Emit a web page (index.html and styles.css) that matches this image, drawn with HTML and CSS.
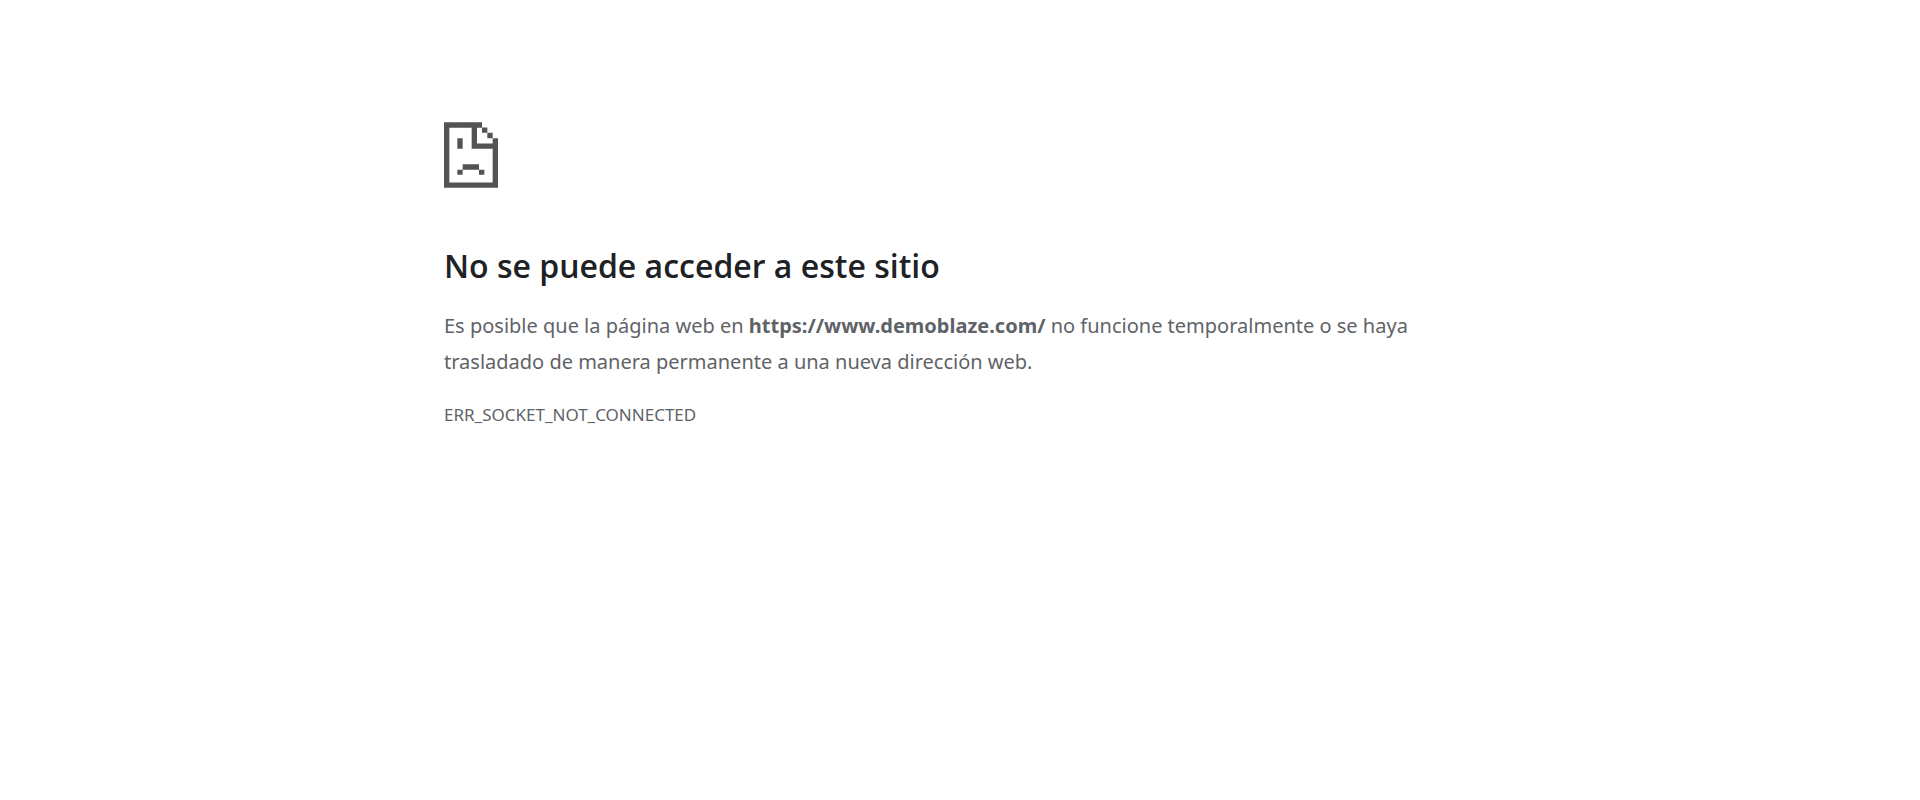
FILE: index.html
```html
<!DOCTYPE html>
<html lang="es">
<head>
<meta charset="utf-8">
<meta name="viewport" content="width=device-width, initial-scale=1">
<title>www.demoblaze.com</title>
<link rel="stylesheet" href="styles.css">
</head>
<body>
<main class="error-page">
  <svg class="error-icon" viewBox="0 0 162 197" aria-hidden="true">
    <path fill-rule="evenodd" d="M0 0H114V16H130V32H146V48H162V197H0ZM16 17V181H146V80H83V17ZM99 17V64H146V48H130V32H114V17Z"/>
    <path d="M40 48h16v32H40ZM56 126h49v17H56ZM40 143h16v15H40ZM105 143h16v15h-16Z"/>
  </svg>
  <h1 class="error-title">No se puede acceder a este sitio</h1>
  <p class="error-text">Es posible que la página web en <strong>https://www.demoblaze.com/</strong> no funcione temporalmente o se haya trasladado de manera permanente a una nueva dirección web.</p>
  <p class="error-code">ERR_SOCKET_NOT_CONNECTED</p>
</main>
</body>
</html>
```
FILE: styles.css
```css
body {
  margin: 0;
  background: #fff;
  color: #5f6368;
  font-family: "Segoe UI", "Noto Sans", "Open Sans", sans-serif;
}

.error-page {
  box-sizing: border-box;
  max-width: 1080px;
  margin: 0 auto;
  padding: 122px 24px 24px;
}

.error-icon {
  display: block;
  width: 54px;
  height: 66px;
  fill: #535353;
}

.error-title {
  margin: 56px 0 20px;
  color: #202124;
  font-family: "Segoe UI", "Open Sans", "Noto Sans", sans-serif;
  font-size: 32px;
  font-weight: 600;
  line-height: 44px;
}

.error-text {
  margin: 0;
  font-size: 20px;
  line-height: 36px;
}

.error-code {
  margin: 20px 0 0;
  font-size: 17px;
  line-height: 30px;
}
```
